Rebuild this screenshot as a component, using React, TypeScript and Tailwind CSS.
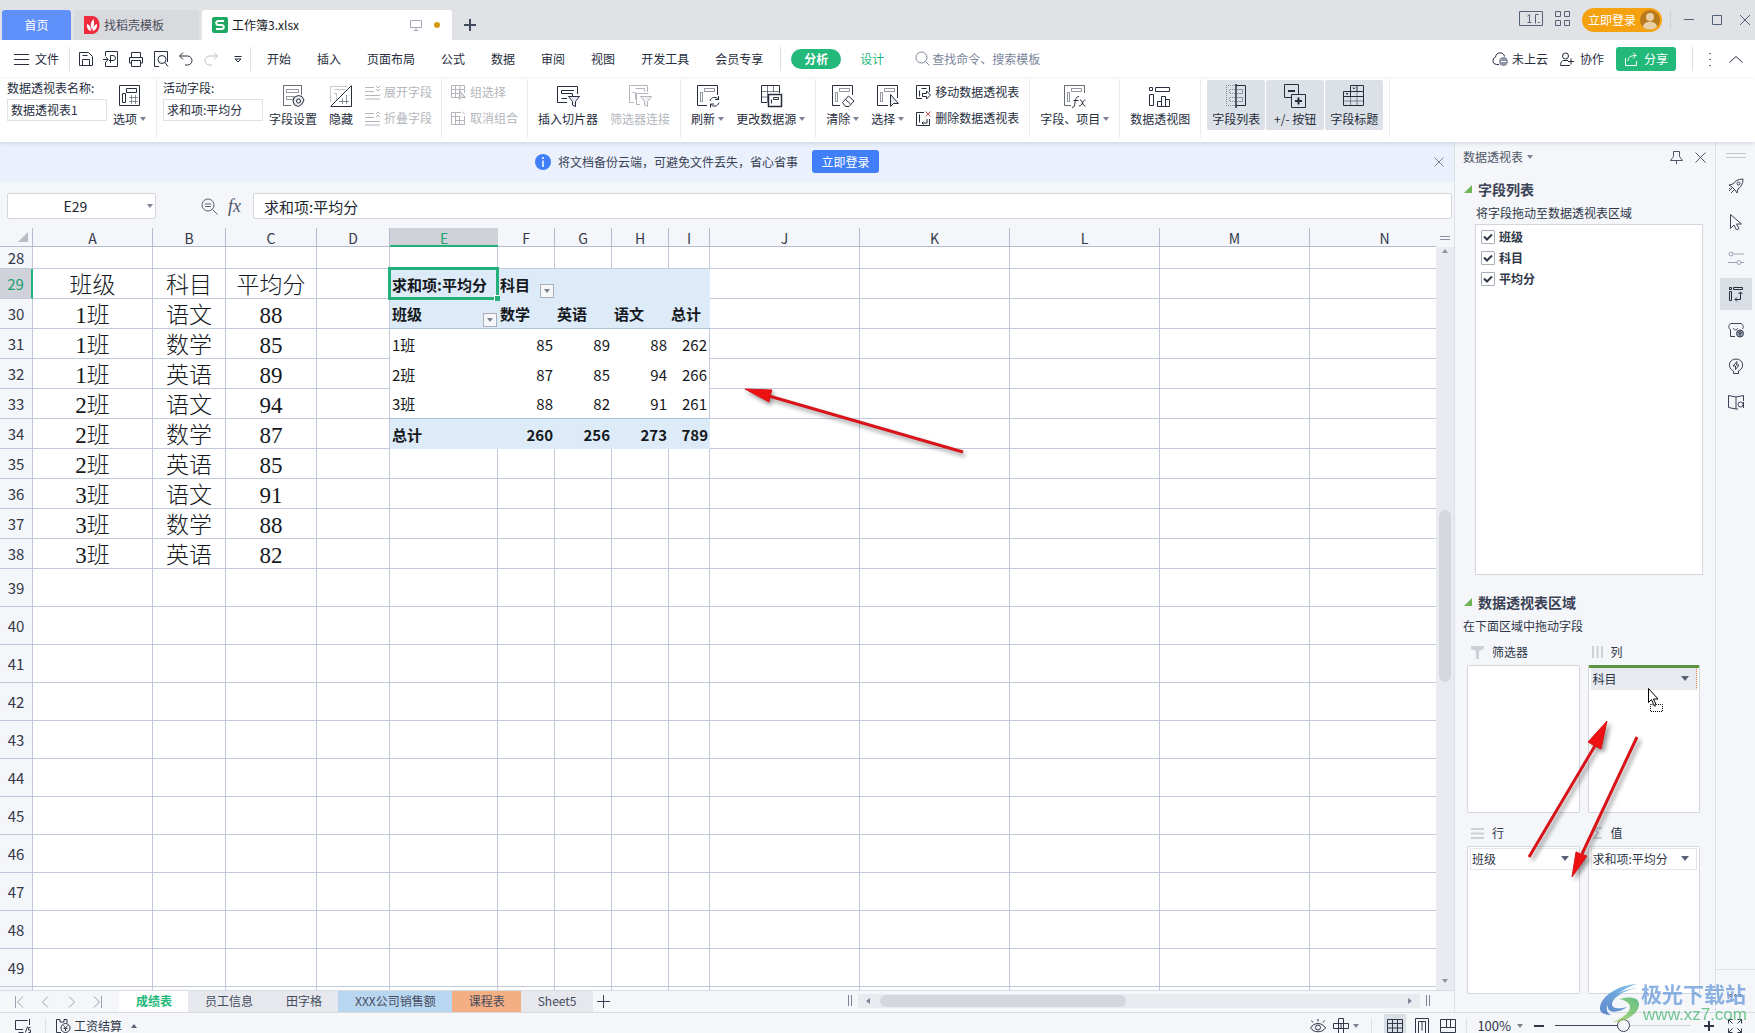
import React from "react";
import type { ReactNode } from "react";

function Ico({ w = 16, h = w, vb, className = "", sw = 1, children }: { w?: number; h?: number; vb?: string; className?: string; sw?: number; children: ReactNode }) {
  return (
    <svg width={w} height={h} viewBox={vb ?? `0 0 ${w} ${h}`} fill="none" stroke="currentColor" strokeWidth={sw} className={`shrink-0 ${className}`} aria-hidden="true">
      {children}
    </svg>
  );
}

function Caret({ className = "text-[#7b8291]" }: { className?: string }) {
  return (
    <svg width="6" height="4" viewBox="0 0 6 4" className={`shrink-0 ${className}`} aria-hidden="true">
      <path d="M0 0h6L3 4z" fill="currentColor" />
    </svg>
  );
}

/* ---------- title bar ---------- */

function TitleBar() {
  return (
    <header className="flex h-10 shrink-0 items-end bg-[#e1e2e6] pl-0.5">
      <nav className="flex h-[30px]">
        <button className="mr-[3px] w-[69px] rounded-t-[3px] bg-[#6090f9] text-white">首页</button>
        <button className="mr-[3px] flex w-[125px] items-center gap-1 rounded-t-[3px] bg-[#d9dadd] pl-2.5 text-[#4a4f5c]">
          <svg width="16" height="18" viewBox="0 0 16 18" aria-hidden="true">
            <path d="M0 0h8c10 0 10 18 0 18H0z" fill="#ef2b3d" />
            <path d="M8 13.500C6 10 6.500 6 9.500 3c1 3.500 1 7.500-1.500 10.500zM7 15C3.500 14 2.500 11 3 8c3 1 4 4 4 7zM8.500 15c3.500-1 5-4 4.500-7-3 1-4.500 4-4.500 7z" fill="#fff" />
          </svg>
          找稻壳模板
        </button>
        <button className="flex w-[250px] items-center rounded-t-[3px] bg-white pl-2.5 pr-3 text-[#16181d]">
          <svg width="16" height="16" viewBox="0 0 16 16" className="mr-1" aria-hidden="true">
            <rect width="16" height="16" rx="2" fill="#1fa862" />
            <path d="M12 4H6.500C3.500 4 3.500 8 6.500 8h3c3 0 3 4 0 4H4" fill="none" stroke="#fff" strokeWidth="2" />
          </svg>
          工作簿3.xlsx
          <Ico w={12} className="ml-auto text-[#a3a9b8]">
            <path d="M.5 1.500h11v7H.5zM6 8.500v3M3.500 11.500h5" />
          </Ico>
          <span className="ml-3 size-1.5 rounded-full bg-[#d29b12]" />
        </button>
        <button aria-label="新建" className="ml-3 grid w-3 place-items-center text-[#3f4a5c]">
          <Ico w={12} sw={2}><path d="M6 0v12M0 6h12" /></Ico>
        </button>
      </nav>
      <div className="ml-auto flex h-10 items-center pr-1 pb-1 text-[#566076]">
        <Ico w={24} h={15} className="mr-3">
          <path d="M.5.500h23v14H.5z" />
          <path d="M8.500 5l2-1.500v8.500M8.500 11.500h4M19.500 3.500h-3v9M19 11.500h1.500" />
        </Ico>
        <Ico w={15} className="mr-3">
          <path d="M.5.500h5v5h-5zM9.500.500h5v5h-5zM.5 9.500h5v5h-5zM9.500 9.500h5v5h-5z" />
        </Ico>
        <button className="mt-1 mr-2 flex h-6 items-center gap-1 rounded-full bg-[#f5a211] pl-1.5 pr-0.5 text-white">
          立即登录
          <svg width="20" height="20" viewBox="0 0 20 20" aria-hidden="true">
            <circle cx="10" cy="10" r="10" fill="#b87a1a" />
            <circle cx="10" cy="7" r="4" fill="#e9cfa4" />
            <path d="M3 17c0-7 14-7 14 0a10 10 0 0 1-14 0z" fill="#e9cfa4" />
          </svg>
        </button>
        <span className="mt-1 mr-3 h-5 w-px bg-[#cfd1d6]" />
        <button aria-label="最小化" className="mt-1 mr-4"><Ico w={12}><path d="M1 5.500h10" /></Ico></button>
        <button aria-label="最大化" className="mt-1 mr-4"><Ico w={12}><path d="M1.500 1.500h9v9h-9z" /></Ico></button>
        <button aria-label="关闭" className="mt-1"><Ico w={12}><path d="M1 1l10 10M11 1L1 11" /></Ico></button>
      </div>
    </header>
  );
}

/* ---------- menu row ---------- */

const menus = ["开始", "插入", "页面布局", "公式", "数据", "审阅", "视图", "开发工具", "会员专享"];

function MenuRow() {
  return (
    <div className="flex h-[39px] shrink-0 items-center bg-white pb-0.5 text-[#262d3d]">
      <button className="ml-3.5 flex items-center gap-1.5">
        <Ico w={15} h={12}><path d="M0 1.500h15M0 6.500h15M0 11.500h15" /></Ico>
        文件
      </button>
      <span className="ml-2.5 h-6 w-px bg-[#dddfe4]" />
      <div className="ml-2 flex gap-[9px]">
        <button aria-label="保存"><Ico w={16}><path d="M1.500 1.500h9l4 4v9h-13zM4.500 14.500v-6h7v6M4.500 4.500h5" /></Ico></button>
        <button aria-label="输出为PDF"><Ico w={16}><path d="M2.500 5V.500h12v15h-12V11M0 8.500h5M3 6l2 2.500L3 11M7.500 12V4.500H10a2 2 0 0 1 0 5H6" /></Ico></button>
        <button aria-label="打印"><Ico w={16}><path d="M3.500 6V1.500h9V6M3.500 12h-2V6.500h13V12h-2M3.500 9.500h9v6h-9z" /></Ico></button>
        <button aria-label="打印预览"><Ico w={16}><path d="M6 15.500H1.500V.500h13V11" /><circle cx="9" cy="8.500" r="4" /><path d="M12 11.500l3 4" /></Ico></button>
        <button aria-label="撤销"><Ico w={16}><path d="M5 1.500L1.500 5 5 8.500M2 5h7.500a4.500 4.500 0 0 1 0 9H7" /></Ico></button>
        <button aria-label="恢复" className="text-[#b9bdc6]"><Ico w={16}><path d="M11 1.500L14.500 5 11 8.500M14 5H6.500a4.500 4.500 0 0 0 0 9H9" /></Ico></button>
      </div>
      <button aria-label="更多" className="ml-[15px]"><Ico w={8}><path d="M.5 1.500h7M1 4l3 3 3-3z" /></Ico></button>
      <span className="ml-2 h-6 w-px bg-[#dddfe4]" />
      <nav className="ml-[3px] flex">
        {menus.map((m) => (
          <button key={m} className="px-[13px]">{m}</button>
        ))}
      </nav>
      <span className="ml-1 h-6 w-px bg-[#dddfe4]" />
      <button className="ml-2.5 h-5 rounded-full bg-[#22b97a] px-[13px] font-bold text-white">分析</button>
      <button className="ml-[19px] text-[#22b97a]">设计</button>
      <label className="ml-[31px] flex items-center gap-0.5 text-[#7c869c]">
        <Ico w={15}><circle cx="6.500" cy="6.500" r="5.500" /><path d="M10.500 10.500l4 4" /></Ico>
        <input placeholder="查找命令、搜索模板" className="w-32 bg-transparent outline-none placeholder:text-[#7c869c]" aria-label="搜索" />
      </label>
      <div className="ml-auto flex items-center pr-3">
        <button className="flex items-center gap-1">
          <Ico w={16}>
            <path d="M7 13.500H4.500a3.800 3.800 0 0 1-1-7.400C4 .5 12 .5 12.500 5.500" />
            <circle cx="11.500" cy="10.500" r="4.500" fill="#8d95a6" stroke="none" />
            <path d="M9 10.500h5" stroke="#fff" />
          </Ico>
          未上云
        </button>
        <button className="ml-3 flex items-center gap-1.5">
          <Ico w={14}><circle cx="5.500" cy="4" r="3" /><path d="M8 8.500H3.500c-3 0-3 5-3 5H10M8 9.500h6M11 6.500v6" /></Ico>
          协作
        </button>
        <button className="ml-3 flex h-6 w-[60px] items-center justify-center gap-1.5 rounded-[3px] bg-[#22b97a] text-white">
          <Ico w={14}><path d="M1.500 6v7.500h11V9M4 9c0-4 3-5.500 8-5.500M9 .5l3 3-3 3" /></Ico>
          分享
        </button>
        <span className="ml-4 h-6 w-px bg-[#dddfe4]" />
        <button aria-label="更多选项" className="ml-4">
          <Ico w={2} h={14} sw={2} className="text-[#6b7280]"><path d="M1 1v1M1 7v1M1 13v1" /></Ico>
        </button>
        <button aria-label="折叠功能区" className="ml-[18px]"><Ico w={14} h={8}><path d="M.5 7.500l6.500-6 6.500 6" /></Ico></button>
      </div>
    </div>
  );
}

/* ---------- ribbon ---------- */

const base = "M8 21.500H1.500V1.500h20V9";
const bars = "M8.500 4.500h10v3h-10zM4.500 8.500h2v9h-2z";

const glyph: Record<string, ReactNode> = {
  options: <Ico w={24}><path d="M1.500 1.500h20v20h-20z" /><path d="M8.500 4.500h10v4h-10zM4.500 9.500h3v9h-3z" /><path d="M13.500 11v9M17.500 11v9M11 13.500h9M11 17.500h9" className="opacity-50" /></Ico>,
  settings: <Ico w={24}><path d="M10 21.500H2.500v-20h18V11" className="opacity-70" /><path d="M5.500 5.500h12v3h-12zM5.500 12.500h7v3h-7z" className="opacity-50" /><path d="M17.500 11.500l3.500 1 2 3.500-2 4-3.500 2.500-4-1.500-1.500-4 1.500-4z" fill="#e8ebf0" /><circle cx="17.500" cy="17" r="2" fill="#fff" /></Ico>,
  hide: <Ico w={24}><path d="M1.500 18V2.500h17M5.500 5.500h11M4.500 9.500h3v7" className="opacity-25" /><path d="M22.500 1.500l-21 21M22.500 2v20.500H2" /><path d="M17.500 11v9M13.500 14v6M10 17.500h10" className="opacity-50" /></Ico>,
  slicer: <Ico w={24}><path d="M11 18.500H1.500V2.500h20V10" /><path d="M18 6.500H5.500v3h11v3M11 14.500H5.500" /><path d="M12.500 12.500h11l-4 5v5l-3-1.500v-3.500z" fill="#e8ebf0" /></Ico>,
  filterLink: <Ico w={24}><path d="M6 18.500H1.500v-17h18V8M7.500 4.500h9v3M4.500 8.500h3v7" /><path d="M12 20.500H8.500v-11h12" /><path d="M12.500 12.500h11l-4 5v5l-3-1.500v-3.500z" fill="#f0f0f2" /></Ico>,
  refresh: <Ico w={24}><path d="M11 21.500H1.500V1.500h20V11" /><path d={bars} className="opacity-50" /><path d="M14 17c1-4 6-5 8.500-1.500V12M22.500 15.500H19M23 18.500c-1 4-6 5-8.500 1.500v3.500M14.500 20H18" /></Ico>,
  source: <Ico w={24}><path d="M8 18.500H2.500V1.500h18V9" /><path d="M2.500 7.500h18M8.500 1.500v17M14.500 1.500v6M2.500 13h6" className="opacity-60" /><path d="M9.500 10.500h13v12h-13z" fill="#fff" strokeWidth="1.500" /><path d="M14.500 13.500h5v2h-5zM12.500 15.500v4" /></Ico>,
  clear: <Ico w={24}><path d="M9 21.500H1.500V1.500h20V11" /><path d={bars} className="opacity-50" /><path d="M11.500 18.500l6-6.500 5.500 5-5 5.500h-3.500zM14.500 15.500l5 4.500" fill="#fff" /></Ico>,
  select: <Ico w={24}><path d="M12 21.500H1.500V1.500h20V14" /><path d={bars} className="opacity-50" /><path d="M14.500 10.500v12l3-3h5z" fill="#e8ebf0" /></Ico>,
  fx: <Ico w={24}><path d={base} className="opacity-70" /><path d={bars} className="opacity-50" /><path d="M9 23.500c2.500 0 2.500-2 3-5s1-6 4-6M10.500 16.500h5M17 16c3 0 2 6 5.500 6M22.500 16c-3 0-3 6-6.500 6" /></Ico>,
  chart: <Ico w={24}><path d="M1.500 3.500h3v3h-3zM7.500 3.500h14v4h-14zM1.500 10.500h4v11h-4zM9.500 17.500h4v5h-4zM13.500 12.500h4v10h-4zM17.500 15.500h4v7h-4z" /></Ico>,
  list: <Ico w={24}><path d="M12 1.500h9.500v20H12" /><path d="M12 0v24" strokeWidth="1.500" /><path d="M13 5.500h5.500v4H13M13 13.500h5.500v4H13" className="opacity-40" /><path d="M11 1.500H2.500v20H11M11 5.500H5.500v4H11M11 13.500H5.500v4H11" strokeDasharray="1 1" className="opacity-50" /></Ico>,
  plusminus: <Ico w={24}><path d="M8 13.500H1.500V.500h14V10" /><path d="M5 7h7" strokeWidth="2" /><path d="M8.500 10.500h14v13h-14z" /><path d="M15.500 13.500v7M12 17h7" strokeWidth="2" /></Ico>,
  titles: <Ico w={24}><path d="M1.500 21.500h20v-14h-20zM8.500 7.500v-6h13v6M15 1.500v6M8.500 7.500v4.500M1.500 12.500h20" /><path d="M8.500 12.500v9M15 7.500v14M1.500 17h20" className="opacity-50" /><path d="M11 3.500l1 1.500 1-1.500M4 9l1 1.500L6 9" /></Ico>,
  expand: <Ico w={15}><path d="M0 2.500h9M0 6.500h9M0 10.500h15M0 14h15M11 1l2 2 2-2M11 4l2 2 2-2" /></Ico>,
  collapse: <Ico w={15}><path d="M0 2.500h9M0 6.500h9M0 10.500h15M0 14h15M11 3l2-2 2 2M11 6l2-2 2 2" /></Ico>,
  group: <Ico w={15}><path d="M8 12.500H.5v-12h13V8M.5 4.500h13M.5 8.500H8M4.500.500v12M9 .5v6" /><path d="M8.500 5.500v9l2-2h4z" fill="#ddd" /></Ico>,
  ungroup: <Ico w={15}><path d="M10 1.500H.5v12h13V5M.5 5.500h9M4.500 1.500v12M8.500 5v8M4.500 9.500h9M11 .5l3 3" /></Ico>,
  move: <Ico w={15}><path d="M6 13.500H.5v-13h13V7M5.500 3.500h5M3.500 5.500v6" /><path d="M6.500 8.500h4V6l4 4-4 4v-2.500h-4z" fill="#fff" /></Ico>,
  remove: <Ico w={15}><path d="M8 1.500H.5v13h13V8M3.500 3.500v8M6 12h5V8M7.500 10.500L6 12l1.500 1.500" /><path d="M9.500.500l5 5M14.500.500l-5 5" stroke="#e0524d" /></Ico>,
};

function Big({ icon, label, caret, off, on }: { icon: string; label: string; caret?: boolean; off?: boolean; on?: boolean }) {
  const tone = off ? "text-[#b3b6bc]" : "text-[#262d3d]";
  const fill = on ? "bg-[#dce1e7] w-[58px] rounded-[2px]" : "px-1.5";
  return (
    <button disabled={off} className={`mt-px flex h-[50px] flex-col items-center pt-1 ${tone} ${fill}`}>
      {glyph[icon]}
      <span className="mt-0.5 flex items-center gap-[3px] leading-[18px] whitespace-nowrap">
        {label}
        {caret && <Caret />}
      </span>
    </button>
  );
}

function Small({ rows, off }: { rows: [string, string][]; off?: boolean }) {
  return (
    <div className={`flex flex-col px-1.5 ${off ? "text-[#b3b6bc]" : "text-[#262d3d]"}`}>
      {rows.map(([icon, label]) => (
        <button key={label} disabled={off} className="flex h-[26px] items-center gap-1 whitespace-nowrap">
          {glyph[icon]}
          {label}
        </button>
      ))}
    </div>
  );
}

function Field({ label, value }: { label: string; value: string }) {
  return (
    <label className="flex w-[100px] flex-col text-[#262d3d]">
      <span className="h-5 leading-[18px]">{label}</span>
      <input defaultValue={value} className="h-[22px] w-full border border-[#dfe2e7] bg-white px-[3px] pb-0.5 outline-none" />
    </label>
  );
}

function Group({ children, className = "px-1" }: { children: ReactNode; className?: string }) {
  return <div className={`flex border-r border-[#ebedf0] ${className}`}>{children}</div>;
}

function Ribbon() {
  return (
    <div className="relative z-10 flex h-[63px] shrink-0 bg-white pb-1 shadow-[0_1px_4px_rgba(60,80,120,0.2)]">
      <Group className="pl-[7px] pr-1"><Field label="数据透视表名称:" value="数据透视表1" /><Big icon="options" label="选项" caret /></Group>
      <Group className="pl-1.5 pr-[3px]">
        <Field label="活动字段:" value="求和项:平均分" />
        <Big icon="settings" label="字段设置" />
        <Big icon="hide" label="隐藏" />
        <Small off rows={[["expand", "展开字段"], ["collapse", "折叠字段"]]} />
      </Group>
      <Group className="px-[3px]"><Small off rows={[["group", "组选择"], ["ungroup", "取消组合"]]} /></Group>
      <Group><Big icon="slicer" label="插入切片器" /><Big off icon="filterLink" label="筛选器连接" /></Group>
      <Group><Big icon="refresh" label="刷新" caret /><Big icon="source" label="更改数据源" caret /></Group>
      <Group>
        <Big icon="clear" label="清除" caret />
        <Big icon="select" label="选择" caret />
        <Small rows={[["move", "移动数据透视表"], ["remove", "删除数据透视表"]]} />
      </Group>
      <Group><Big icon="fx" label="字段、项目" caret /></Group>
      <Group><Big icon="chart" label="数据透视图" /></Group>
      <Group className="gap-px px-1.5">
        <Big on icon="list" label="字段列表" />
        <Big on icon="plusminus" label="+/- 按钮" />
        <Big on icon="titles" label="字段标题" />
      </Group>
    </div>
  );
}

/* ---------- notice and formula bar ---------- */

function Notice() {
  return (
    <div className="flex h-10 shrink-0 items-center bg-[#eaf1fd] pr-2.5 text-[#3a4255]">
      <div className="flex flex-1 items-center justify-center pr-5 pb-px">
        <svg width="16" height="16" viewBox="0 0 16 16" className="mr-[7px]" aria-hidden="true">
          <circle cx="8" cy="8" r="8" fill="#417ff9" />
          <path d="M8 3v2M8 6.500V13" stroke="#fff" strokeWidth="1.500" />
        </svg>
        将文档备份云端，可避免文件丢失，省心省事
        <button className="ml-3.5 h-[23px] w-[67px] rounded-[3px] bg-[#417ff9] text-white">立即登录</button>
      </div>
      <button aria-label="关闭提示" className="text-[#7a8397]"><Ico w={10}><path d="M.5.500l9 9M9.500.500l-9 9" /></Ico></button>
    </div>
  );
}

function FormulaBar() {
  return (
    <div className="flex h-[46px] shrink-0 items-center gap-2.5 bg-[#f4f6f9] pt-0.5 pr-0.5 pl-[7px] text-[#22262f]">
      <div className="mr-[35px] flex h-[26px] w-[149px] items-center rounded-[2px] border border-[#d3d6dc] bg-white pr-0.5">
        <input defaultValue="E29" aria-label="名称框" className="w-0 flex-1 bg-transparent pr-1 text-center text-sm outline-none" />
        <Caret />
      </div>
      <Ico w={17} className="text-[#5a6274]"><circle cx="7" cy="7" r="6" /><path d="M11.500 11.500l5 5M4 6h6M4 8.500h6" /></Ico>
      <span className="w-[15px] font-['Liberation_Serif',serif] text-lg leading-none text-[#4d5566] italic">fx</span>
      <input defaultValue="求和项:平均分" aria-label="编辑栏" className="h-[26px] flex-1 rounded-[2px] border border-[#d3d6dc] bg-white px-2.5 text-[15px] outline-none" />
    </div>
  );
}

/* ---------- worksheet ---------- */

const cols = ["A", "B", "C", "D", "E", "F", "G", "H", "I", "J", "K", "L", "M", "N"];
const widths = [120, 73, 91, 73, 108, 57, 57, 57, 41, 150, 150, 150, 150];

const scores: Record<number, string[]> = {
  29: ["班级", "科目", "平均分"],
  30: ["1班", "语文", "88"],
  31: ["1班", "数学", "85"],
  32: ["1班", "英语", "89"],
  33: ["2班", "语文", "94"],
  34: ["2班", "数学", "87"],
  35: ["2班", "英语", "85"],
  36: ["3班", "语文", "91"],
  37: ["3班", "数学", "88"],
  38: ["3班", "英语", "82"],
};

const pivot: Record<number, string[]> = {
  29: ["求和项:平均分", "科目", "", "", ""],
  30: ["班级", "数学", "英语", "语文", "总计"],
  31: ["1班", "85", "89", "88", "262"],
  32: ["2班", "87", "85", "94", "266"],
  33: ["3班", "88", "82", "91", "261"],
  34: ["总计", "260", "256", "273", "789"],
};

const lastRow = 50;
const rows = Array.from({ length: 23 }, (_, i) => 28 + i);

function FilterButton({ label }: { label: string }) {
  return (
    <button aria-label={label} className="absolute right-px bottom-px grid size-[14px] place-items-center border border-[#a9aeb8] bg-[#f6f7f9]">
      <Caret />
    </button>
  );
}

function PivotCell({ row, i, text }: { row: number; i: number; text: string }) {
  const head = row < 31 || row === 34;
  const right = i > 0 && row > 30;
  const bg = head ? "bg-[#dcebf7]" : "bg-white";
  const bottom = row === 30 || row === 33 ? "border-b border-[#a9c4dd]" : "";
  const side = !head && i === 4 ? "border-r border-r-[#c3c9dc]" : "";
  return (
    <td className={`relative whitespace-nowrap px-0.5 py-0 text-[15px] leading-none text-[#15181d] ${bg} ${bottom} ${side} ${right ? "text-right" : ""} ${head ? "font-bold" : ""}`}>
      {text}
      {row === 29 && i === 0 && (
        <span className="absolute -top-0.5 -right-px -bottom-px -left-0.5 z-10 border-[3px] border-[#23b07a]">
          <span className="absolute -right-1 -bottom-1 size-1.5 border-t border-l border-white bg-[#23b07a]" />
        </span>
      )}
      {row === 29 && i === 1 && <FilterButton label="筛选科目" />}
      {row === 30 && i === 0 && <FilterButton label="筛选班级" />}
    </td>
  );
}

function Sheet() {
  return (
    <div className="relative min-w-0 flex-1 overflow-hidden bg-white">
      <table className="w-[calc(100%+24px)] table-fixed border-separate border-spacing-0">
        <colgroup>
          <col className="w-[33px]" />
          {widths.map((w, i) => <col key={i} style={{ width: w }} />)}
          <col />
        </colgroup>
        <thead>
          <tr className="h-[19px] bg-[#f4f6f9]">
            <th className="border-r border-b border-[#b4bbcf] p-0">
              <svg width="10" height="10" viewBox="0 0 10 10" className="ml-auto mr-1" aria-hidden="true"><path d="M10 0v10H0z" fill="#b9bdc5" /></svg>
            </th>
            {cols.map((c) => (
              <th key={c} scope="col" className={`p-0 pt-0.5 text-sm leading-none font-normal ${c === "E" ? "border-b-2 border-[#23b07a] bg-[#cfd2d9] text-[#23a06c]" : "border-r border-b border-[#b4bbcf] text-[#33384a]"}`}>
                {c}
              </th>
            ))}
          </tr>
        </thead>
        <tbody>
          {rows.map((r) => {
            const h = r === 28 ? "h-[22px]" : r < 39 ? "h-[30px]" : "h-[38px]";
            const score = scores[r];
            const pv = pivot[r];
            return (
              <tr key={r} className={h}>
                <th scope="row" className={`border-r border-b p-0 text-[15px] leading-none font-normal ${r === 29 ? "border-r-2 border-b-[#c3c9dc] border-r-[#23b07a] bg-[#cfd2d9] text-[#23a06c]" : "border-[#c3c9dc] bg-[#f4f6f9] text-[#33384a]"}`}>
                  {r < lastRow ? r : null}
                </th>
                {cols.map((c, i) => {
                  if (pv && i >= 4 && i <= 8) return <PivotCell key={c} row={r} i={i - 4} text={pv[i - 4]} />;
                  return (
                    <td key={c} className={`border-r border-b border-[#c3c9dc] p-0 text-center font-['Liberation_Serif','Noto_Sans_CJK_SC',serif] text-[23px] leading-none font-light text-[#15181d] ${score ? "pt-1" : ""}`}>
                      {score && i < 3 ? score[i] : null}
                    </td>
                  );
                })}
              </tr>
            );
          })}
        </tbody>
      </table>
      <svg width="240" height="90" viewBox="0 0 240 90" className="absolute top-[152px] left-[738px] drop-shadow-[2px_3px_2px_rgba(0,0,0,0.4)]" aria-hidden="true">
        <path d="M31 16L225 72" stroke="#d8141a" strokeWidth="3" />
        <path d="M7 9l27 1-2 6-1 6z" fill="#ee1111" stroke="#d8141a" />
      </svg>
    </div>
  );
}

function VScroll() {
  return (
    <div className="flex w-[18px] shrink-0 flex-col bg-[#f4f6f9]">
      <div className="grid h-[19px] place-items-center text-[#8b92a2]"><Ico w={10} h={4}><path d="M0 .5h10M0 3.500h10" /></Ico></div>
      <div className="flex flex-1 flex-col items-center bg-[#e9ebf0] pt-0.5 pb-[7px] text-[#8b92a2]">
        <svg width="6" height="4" aria-hidden="true"><path d="M0 4h6L3 0z" fill="currentColor" /></svg>
        <div className="grow-[250]" />
        <div className="h-[172px] w-3 rounded-full bg-[#d4d7de]" />
        <div className="grow-[288]" />
        <Caret className="text-[#8b92a2]" />
      </div>
    </div>
  );
}

const sheets: [string, string][] = [
  ["成绩表", "bg-white font-bold text-[#22b97a]"],
  ["员工信息", "bg-[#e6e8ed] text-[#454c5e]"],
  ["田字格", "bg-[#e6e8ed] text-[#454c5e]"],
  ["XXX公司销售额", "bg-[#b9d6f0] text-[#454c5e]"],
  ["课程表", "bg-[#f4ae84] text-[#454c5e]"],
  ["Sheet5", "bg-[#e6e8ed] text-[#454c5e]"],
];

function SheetTabs() {
  return (
    <div className="flex h-[22px] shrink-0 items-center border-t border-[#d9dce3] bg-[#f4f6f9]">
      <div className="flex w-[119px] justify-between pr-4 pl-3.5 text-[#9ba2b0]">
        <button aria-label="第一张"><Ico w={10} h={12}><path d="M1.500 0v12M9 .5L3.500 6 9 11.500" /></Ico></button>
        <button aria-label="上一张"><Ico w={10} h={12}><path d="M8 .5L2.500 6 8 11.500" /></Ico></button>
        <button aria-label="下一张"><Ico w={10} h={12}><path d="M2 .5L7.500 6 2 11.500" /></Ico></button>
        <button aria-label="最后一张"><Ico w={10} h={12}><path d="M1 .5L6.500 6 1 11.500M8.500 0v12" /></Ico></button>
      </div>
      {sheets.map(([name, tone]) => (
        <button key={name} className={`h-full pr-4 pb-px pl-[17px] whitespace-nowrap ${tone}`}>{name}</button>
      ))}
      <button aria-label="新建工作表" className="ml-1 text-[#3a4255]"><Ico w={13}><path d="M6.500 0v13M0 6.500h13" /></Ico></button>
      <div className="ml-auto flex w-5/12 items-center pb-0.5 text-[#7d8596]">
        <Ico w={4} h={11}><path d="M.5 0v11M3.500 0v11" /></Ico>
        <div className="ml-1.5 flex h-[14px] flex-1 items-center bg-[#e9ebf0] px-2">
          <svg width="4" height="6" aria-hidden="true"><path d="M4 0v6L0 3z" fill="currentColor" /></svg>
          <div className="ml-2.5 h-3 w-[45%] rounded-full bg-[#d4d7de]" />
          <svg width="4" height="6" className="ml-auto" aria-hidden="true"><path d="M0 0v6l4-3z" fill="currentColor" /></svg>
        </div>
        <Ico w={4} h={11} className="mr-6 ml-1.5"><path d="M.5 0v11M3.500 0v11" /></Ico>
      </div>
    </div>
  );
}

/* ---------- pivot panel ---------- */

function SectionTitle({ children }: { children: ReactNode }) {
  return (
    <h2 className="flex h-5 items-center gap-1.5 pb-0.5 text-sm font-bold text-[#3a4255]">
      <svg width="8" height="8" aria-hidden="true"><path d="M8 0v8H0z" fill="#6fb457" /></svg>
      {children}
    </h2>
  );
}

function Area({ icon, label, item, active }: { icon: ReactNode; label: string; item?: string; active?: boolean }) {
  return (
    <section className="flex flex-col">
      <h3 className="flex h-[22px] items-start gap-2 pl-1 leading-[18px]">
        <span className="flex h-[18px] items-center text-[#cdd0d6]">{icon}</span>
        {label}
      </h3>
      <div className={`h-[148px] rounded-[2px] border border-[#d3d6dc] bg-white px-0.5 ${active ? "border-t-[3px] border-t-[#5a9440] pl-0.5" : "pt-px"}`}>
        {item && (
          <button className={`flex h-[22px] w-full items-center justify-between border pr-[7px] pb-px pl-px ${active ? "border-transparent border-r-[#e2894e] bg-[#e7eaee] [border-right-style:dotted]" : "border-[#e3e5ea] bg-white"}`}>
            {item}
            <svg width="8" height="5" aria-hidden="true"><path d="M0 0h8L4 5z" fill="#5a6274" /></svg>
          </button>
        )}
      </div>
    </section>
  );
}

function PivotPanel() {
  return (
    <aside className="relative flex w-[261px] shrink-0 flex-col border-l border-[#dde0e6] bg-[#f4f6f9] pb-[18px] text-[#2f3748]">
      <div className="flex h-[30px] shrink-0 items-center pr-[9px] pl-2 text-[#4d5566]">
        <button className="flex items-center gap-1">数据透视表<Caret /></button>
        <button aria-label="固定" className="ml-auto"><Ico w={13}><path d="M3.500.500h6v5l3 4H.5l3-4zM6.500 9.500V13" /></Ico></button>
        <button aria-label="关闭面板" className="ml-3"><Ico w={11}><path d="M.5.500l10 10M10.500.500l-10 10" /></Ico></button>
      </div>
      <div className="mt-2 pl-[9px]"><SectionTitle>字段列表</SectionTitle></div>
      <p className="mt-1 mb-0.5 pl-[21px] leading-[18px]">将字段拖动至数据透视表区域</p>
      <ul className="mr-3 ml-5 min-h-20 flex-1 border border-[#d3d6dc] bg-white pt-px pl-[5px]">
        {["班级", "科目", "平均分"].map((f) => (
          <li key={f} className="flex h-[21px] items-center">
            <label className="flex items-center gap-1 font-bold">
              <span className="grid size-[14px]">
                <input type="checkbox" defaultChecked className="col-start-1 row-start-1 size-[14px] appearance-none rounded-[1px] border border-[#a9aeb8] bg-white" />
                <Ico w={14} sw={2} className="pointer-events-none col-start-1 row-start-1 text-[#2f3748]"><path d="M3 6.500l3 3 5-5" /></Ico>
              </span>
              {f}
            </label>
          </li>
        ))}
      </ul>
      <div className="mt-[18px] pl-[9px]"><SectionTitle>数据透视表区域</SectionTitle></div>
      <p className="mt-1 mb-2 pl-2 leading-[18px]">在下面区域中拖动字段</p>
      <div className="mr-[15px] ml-3 grid grid-cols-2 gap-x-2 gap-y-[11px]">
        <Area label="筛选器" icon={<svg width="13" height="13" aria-hidden="true"><path d="M0 0h13v3L8 5v8H5V5L0 3z" fill="currentColor" /></svg>} />
        <Area label="列" item="科目" active icon={<Ico w={11} h={12} sw={2}><path d="M1 0v12M5.500 0v12M10 0v12" /></Ico>} />
        <Area label="行" item="班级" icon={<Ico w={13} h={11} sw={2}><path d="M0 1h13M0 5.500h13M0 10h13" /></Ico>} />
        <Area label="值" item="求和项:平均分" icon={<Ico w={11} h={12} sw={2}><path d="M10 1H2l4 5-4 5h8" /></Ico>} />
      </div>
      <svg width="180" height="190" viewBox="0 0 180 190" className="pointer-events-none absolute right-5 bottom-[114px] drop-shadow-[3px_3px_2px_rgba(0,0,0,0.4)]" aria-hidden="true">
        <path d="M14 149L81 36M122 29L67 146" stroke="#d8141a" strokeWidth="3" />
        <path d="M92 13l-6 28-6-3-7-4zM57 169l4-25 5 2 6 2z" fill="#ee1111" stroke="#d8141a" />
      </svg>
      <svg width="18" height="26" viewBox="0 0 18 26" className="pointer-events-none absolute right-[50px] bottom-[299px]" aria-hidden="true">
        <path d="M1.500 1.500v14l3-3 2.500 6 2-1-2.500-5.500h4.500z" fill="#fff" stroke="#000" />
        <path d="M3.500 17.500h3l1 2 2-1v-1h6v7h-12z" fill="#fff" stroke="#000" strokeDasharray="1 1" />
      </svg>
    </aside>
  );
}

function SideRail() {
  const item = "grid h-8 w-8 place-items-center";
  return (
    <aside className="flex w-10 shrink-0 flex-col items-center gap-1 border-l border-[#dde0e6] bg-[#f4f6f9] text-[#3a4255]">
      <Ico w={20} h={28} className="text-[#c3c7d0]"><path d="M0 11.500h20M0 15.500h20" /></Ico>
      <button aria-label="快捷" className={`${item} -mt-1`}><Ico w={16}><path d="M15 1c-5 0-8 2-10 5L1 7l3 2 3 3 2 3 1-4c3-2 5-5 5-10z" /><circle cx="10.500" cy="5.500" r="1.500" /><path d="M4 10l-3 3M6 12l-3 3M2 10l-1 1" /></Ico></button>
      <button aria-label="选择" className={item}><Ico w={16}><path d="M2.500 .5v14l3.500-3.500 2.500 5 2.500-1.500-2.500-4.500h5z" /></Ico></button>
      <button aria-label="设置" className={`${item} text-[#9ba2b0]`}><Ico w={16}><circle cx="3" cy="4" r="2" /><path d="M5 4h11M0 12.500h9M13 12.500h3" /><circle cx="11" cy="12.500" r="2" /></Ico></button>
      <button aria-label="数据透视表" className={`${item} bg-[#dadee5] text-[#262d3d]`}><Ico w={16}><path d="M1.500 1.500h2v2h-2zM5.500 1.500h9v2h-9zM1.500 5.500h2v9h-2zM12.500 6v7.500H7M10.500 8l2-2 2 2M9 11.500l-2 2 2 2" /></Ico></button>
      <button aria-label="稻壳" className={item}><Ico w={16}><path d="M7 14.500H2.500v-7C0 7 .5 2 3 1.500h10c2 .5 3 4 1.500 5.500M5.500 6c0 2.500 4 2.500 4 0" /><circle cx="12" cy="11.500" r="3.500" fill="#9ba2b0" /><path d="M12 8v7M9.500 10l2.500 2 2.500-2" /></Ico></button>
      <button aria-label="创意" className={item}><Ico w={16}><path d="M5.500 13C-1 10 .5 1 8 1s9 9 2.500 12v2.500h-5z" /><path d="M9 3.500L5 8h2.500v3.500L11 7H8.500z" /></Ico></button>
      <button aria-label="帮助" className={item}><Ico w={16}><path d="M8 3L.5 1.500v12L8 15V3l7.500-1.500V7M8 15h2" /><circle cx="12.500" cy="10.500" r="2.500" /><path d="M15.500 8v6" /></Ico></button>
      <div className="mt-auto flex h-[43px] w-full items-center justify-center gap-0.5 border-t border-[#dde0e6] pt-2">
        <span className="size-[3px] rounded-full border border-[#3a4255]" />
        <span className="size-[3px] rounded-full border border-[#3a4255]" />
        <span className="size-[3px] rounded-full border border-[#3a4255]" />
      </div>
    </aside>
  );
}

/* ---------- status bar ---------- */

function StatusBar() {
  return (
    <footer className="h-[21px] shrink-0 overflow-hidden border-t border-[#d9dce3] bg-[#f4f6f9] text-[#2f3748]">
      <div className="flex h-[25px] items-center pr-3 pl-[15px] leading-4">
        <Ico w={16}><path d="M8 11.500H.5v-9h12M3.500 14.500h5M14.500 1v6M10.500 14.500l2-6M15.500 9.500h-2v2.500h2v2.500h-2" /></Ico>
        <span className="mr-2.5 ml-3.5 h-4 w-px bg-[#dde0e6]" />
        <button className="flex items-center gap-[3px]">
          <Ico w={15}><path d="M5 14.500H.5V1.500H4V4h4V1.500h3V5" /><circle cx="9.500" cy="10" r="4.500" /><path d="M7.500 7.500l2 2.500 2-2.500M9.500 10v3M7.500 10.500h4" /></Ico>
          工资结算
          <svg width="6" height="4" className="ml-1.5 text-[#5a6274]" aria-hidden="true"><path d="M0 4h6L3 0z" fill="currentColor" /></svg>
        </button>
        <div className="ml-auto flex items-center">
          <button aria-label="护眼模式"><Ico w={16}><path d="M.5 10C4 4 12 4 15.500 10 12 15 4 15 .5 10zM8 3.500V1M3 4.500L1.500 2.500M13 4.500l1.500-2" /><circle cx="8" cy="9.500" r="2.500" /></Ico></button>
          <button aria-label="阅读模式" className="ml-[7px] flex items-center gap-1"><Ico w={16}><path d="M5.500.500h5v15h-5zM.5 5.500h15v5H.5zM8 5.500v5" /></Ico><Caret /></button>
          <span className="mx-3 h-4 w-px bg-[#dde0e6]" />
          <button aria-label="普通视图" className="grid h-6 w-[22px] place-items-center bg-[#dadee5]"><Ico w={16}><path d="M.5 1.500h15v13H.5zM.5 5.500h15M.5 10h15M5.500 1.500v13M10.500 1.500v13" /></Ico></button>
          <button aria-label="页面布局视图" className="ml-2"><Ico w={16}><path d="M1.500.500h13v15h-13zM4.500 3.500h7v12M4.500 3.500v12M8 3.500v9" /></Ico></button>
          <button aria-label="分页预览" className="ml-2.5"><Ico w={16}><path d="M.5 1.500h15v13H.5zM.5 9.500h15M6.500 1.500v8M10.500 1.500v8" /></Ico></button>
          <span className="mx-2.5 h-4 w-px bg-[#dde0e6]" />
          <button className="flex items-center gap-1.5 text-[13px] leading-4">100%<Caret /></button>
          <button aria-label="缩小" className="ml-2.5"><Ico w={12} sw={2}><path d="M1 6h10" /></Ico></button>
          <input
            type="range"
            aria-label="缩放比例"
            defaultValue={50}
            className="mr-3 ml-2.5 h-3.5 w-[136px] appearance-none bg-transparent [&::-webkit-slider-runnable-track]:h-px [&::-webkit-slider-runnable-track]:bg-[linear-gradient(to_right,#3a4255_50%,#cfd3da_50%)] [&::-webkit-slider-thumb]:-mt-1.5 [&::-webkit-slider-thumb]:size-[13px] [&::-webkit-slider-thumb]:appearance-none [&::-webkit-slider-thumb]:rounded-full [&::-webkit-slider-thumb]:border [&::-webkit-slider-thumb]:border-solid [&::-webkit-slider-thumb]:border-[#3a4255] [&::-webkit-slider-thumb]:bg-[#f4f6f9]"
          />
          <button aria-label="放大"><Ico w={12} sw={2}><path d="M6 1v10M1 6h10" /></Ico></button>
          <button aria-label="全屏" className="ml-3"><Ico w={16}><path d="M1.500 5.500v-4h4M10.500 1.500h4v4M14.500 10.500v4h-4M5.500 14.500h-4v-4M1.500 1.500l4 4M14.500 1.500l-4 4M14.500 14.500l-4-4M1.500 14.500l4-4" /></Ico></button>
        </div>
      </div>
    </footer>
  );
}

function Watermark() {
  return (
    <div className="pointer-events-none absolute right-2 bottom-2 z-20 flex items-center opacity-80">
      <svg width="42" height="40" viewBox="0 0 42 40" aria-hidden="true">
        <defs>
          <linearGradient id="swirlBlue" x1="0" y1="1" x2="1" y2="0"><stop offset="0" stopColor="#3c6fc0" /><stop offset="1" stopColor="#5fb3ea" /></linearGradient>
          <linearGradient id="swirlGreen" x1="0" y1="1" x2="1" y2="0"><stop offset="0" stopColor="#a5d05a" /><stop offset="1" stopColor="#3fb16a" /></linearGradient>
        </defs>
        <path d="M38 1C20 2 3 12 1 24c-1 6 5 8 11 8-6-3-5-9 0-14C18 10 28 4 38 1z" fill="url(#swirlBlue)" />
        <path d="M38 5C26 7 14 14 13 21c0 5 7 5 15 3-6 5-18 7-19 1C8 16 22 6 38 5z" fill="url(#swirlBlue)" />
        <path d="M20 16c10-3 20-2 20 5 0 9-12 18-26 18 8-3 17-9 17-15 0-4-5-7-11-8z" fill="url(#swirlGreen)" />
      </svg>
      <div className="flex flex-col items-start">
        <span className="text-[21px] leading-6 font-bold text-[#6f9fdc]">极光下载站</span>
        <span className="pl-0.5 font-['Liberation_Sans',sans-serif] text-[17px] leading-5 text-[#4fb975]">www.xz7.com</span>
      </div>
    </div>
  );
}

export default function App() {
  return (
    <div className="relative flex h-screen min-w-[1400px] flex-col overflow-hidden bg-[#f4f6f9] font-['Noto_Sans_CJK_SC',sans-serif] text-xs">
      <TitleBar />
      <MenuRow />
      <Ribbon />
      <div className="flex min-h-0 flex-1">
        <main className="flex min-w-0 flex-1 flex-col">
          <Notice />
          <FormulaBar />
          <div className="flex min-h-0 flex-1">
            <Sheet />
            <VScroll />
          </div>
          <SheetTabs />
        </main>
        <PivotPanel />
        <SideRail />
      </div>
      <StatusBar />
      <Watermark />
    </div>
  );
}
